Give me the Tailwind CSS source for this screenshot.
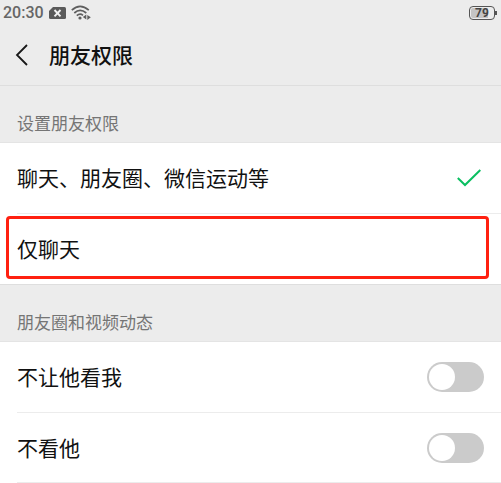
<!DOCTYPE html>
<html lang="zh-CN">
<head>
  <meta charset="utf-8"/>
  <meta content="width=device-width, initial-scale=1.0" name="viewport"/>
  <title>朋友权限</title>
  <script src="https://cdn.jsdelivr.net/npm/@tailwindcss/browser@4"></script>
</head>
<body class="min-h-screen bg-white text-[#111] font-[Roboto,'Noto_Sans_CJK_SC',sans-serif]">

  <!-- Status bar -->
  <div class="flex items-center h-6 pt-px pl-[3px] pr-1 bg-[#ececec] text-[#666]">
    <span class="text-base leading-6 font-medium">20:30</span>
    <svg class="ml-[5px] w-[17px] h-3" viewBox="0 0 17 12" aria-hidden="true">
      <path d="M4 0H15.5Q17 0 17 1.500V10.500Q17 12 15.500 12H1.500Q0 12 0 10.500V4Z" fill="#5a5a5a"/>
      <path d="M5.500 3L11.500 9.300M11.500 3L5.500 9.300" stroke="#f2f2f2" stroke-width="1.900"/>
    </svg>
    <svg class="ml-[5px] w-5 h-4" viewBox="0 0 20 16" fill="none" stroke="#5e5e5e" stroke-width="1.700" aria-hidden="true">
      <path d="M0.800 5.200Q9 -2.400 17.800 5.200"/>
      <path d="M3.300 8Q9 2.800 15.300 8"/>
      <path d="M5.800 10.700Q9 7.800 12 10.300"/>
      <circle cx="9" cy="13" r="1.600" fill="#5e5e5e" stroke="none"/>
      <path d="M15.300 9.500V14.500L11.800 12ZM16.300 15V10L19.800 12.200Z" fill="#5e5e5e" stroke="none"/>
    </svg>
    <div class="ml-auto flex items-center">
      <div class="flex w-[26px] h-[14px] p-px rounded-[4px] border border-[#555]">
        <span class="flex-1 rounded-[2px] bg-linear-to-r from-[#c4c4c4] from-79% to-[#ececec] to-79% text-center text-xs leading-[11px] font-bold text-[#444]">79</span>
      </div>
      <div class="w-[2px] h-1 bg-[#555]"></div>
    </div>
  </div>

  <!-- Title bar -->
  <header class="flex items-center h-[62px] pl-[15px] border-b border-[#dedede] bg-[#ececec]">
    <button type="button" aria-label="返回" class="flex w-[34px]">
      <svg class="w-[14px] h-[22px]" viewBox="0 0 14 22" fill="none" stroke="#181818" stroke-width="1.800">
        <path d="M12 1L2 11L12 21"/>
      </svg>
    </button>
    <h1 class="pt-[2px] text-[21px] leading-8 font-medium">朋友权限</h1>
  </header>

  <main>
    <!-- Permission choice -->
    <section>
      <h2 class="h-[57px] pt-[26px] pl-[17px] border-b border-[#e4e4e4] bg-[#ececec] text-[17px] leading-6 text-[#757575]">设置朋友权限</h2>
      <label class="flex items-center justify-between h-[71px] ml-[17px] pr-5 border-b border-[#ececec]">
        <span class="pt-[2px] text-[21px] leading-8">聊天、朋友圈、微信运动等</span>
        <input type="radio" name="scope" checked class="peer appearance-none w-0 h-0"/>
        <svg class="hidden peer-checked:block w-6 h-[18px]" viewBox="0 0 24 18" fill="none" stroke="#0abf61" stroke-width="2" aria-hidden="true">
          <path d="M0.800 9L8 16L23.300 1"/>
        </svg>
      </label>
      <label class="relative flex items-center justify-between h-[71px] pl-[17px] pr-5 border-b border-[#dedede]">
        <span class="pt-[2px] text-[21px] leading-8">仅聊天</span>
        <input type="radio" name="scope" class="peer appearance-none w-0 h-0"/>
        <svg class="hidden peer-checked:block w-6 h-[18px]" viewBox="0 0 24 18" fill="none" stroke="#0abf61" stroke-width="2" aria-hidden="true">
          <path d="M0.800 9L8 16L23.300 1"/>
        </svg>
        <!-- Highlight frame -->
        <span class="absolute top-[2px] bottom-[5px] left-[6px] right-3 rounded-[4px] border-3 border-[#ff2010]"></span>
      </label>
    </section>

    <!-- Moments -->
    <section>
      <h2 class="h-[57px] pt-[26px] pl-[17px] border-b border-[#e4e4e4] bg-[#ececec] text-[17px] leading-6 text-[#757575]">朋友圈和视频动态</h2>
      <label class="flex items-center justify-between h-[71px] ml-[17px] pr-[17px] border-b border-[#ececec]">
        <span class="pt-[2px] text-[21px] leading-8">不让他看我</span>
        <input type="checkbox" role="switch" class="appearance-none flex items-center w-[57px] h-[30px] px-[2px] rounded-full bg-[#cbcbcb] checked:bg-[#07c160] before:w-[26px] before:h-[26px] before:rounded-full before:bg-white checked:before:ml-auto"/>
      </label>
      <label class="flex items-center justify-between h-[70px] ml-[17px] pr-[17px] border-b border-[#ececec]">
        <span class="pt-[2px] text-[21px] leading-8">不看他</span>
        <input type="checkbox" role="switch" class="appearance-none flex items-center w-[57px] h-[30px] px-[2px] rounded-full bg-[#cbcbcb] checked:bg-[#07c160] before:w-[26px] before:h-[26px] before:rounded-full before:bg-white checked:before:ml-auto"/>
      </label>
    </section>
  </main>

</body>
</html>
